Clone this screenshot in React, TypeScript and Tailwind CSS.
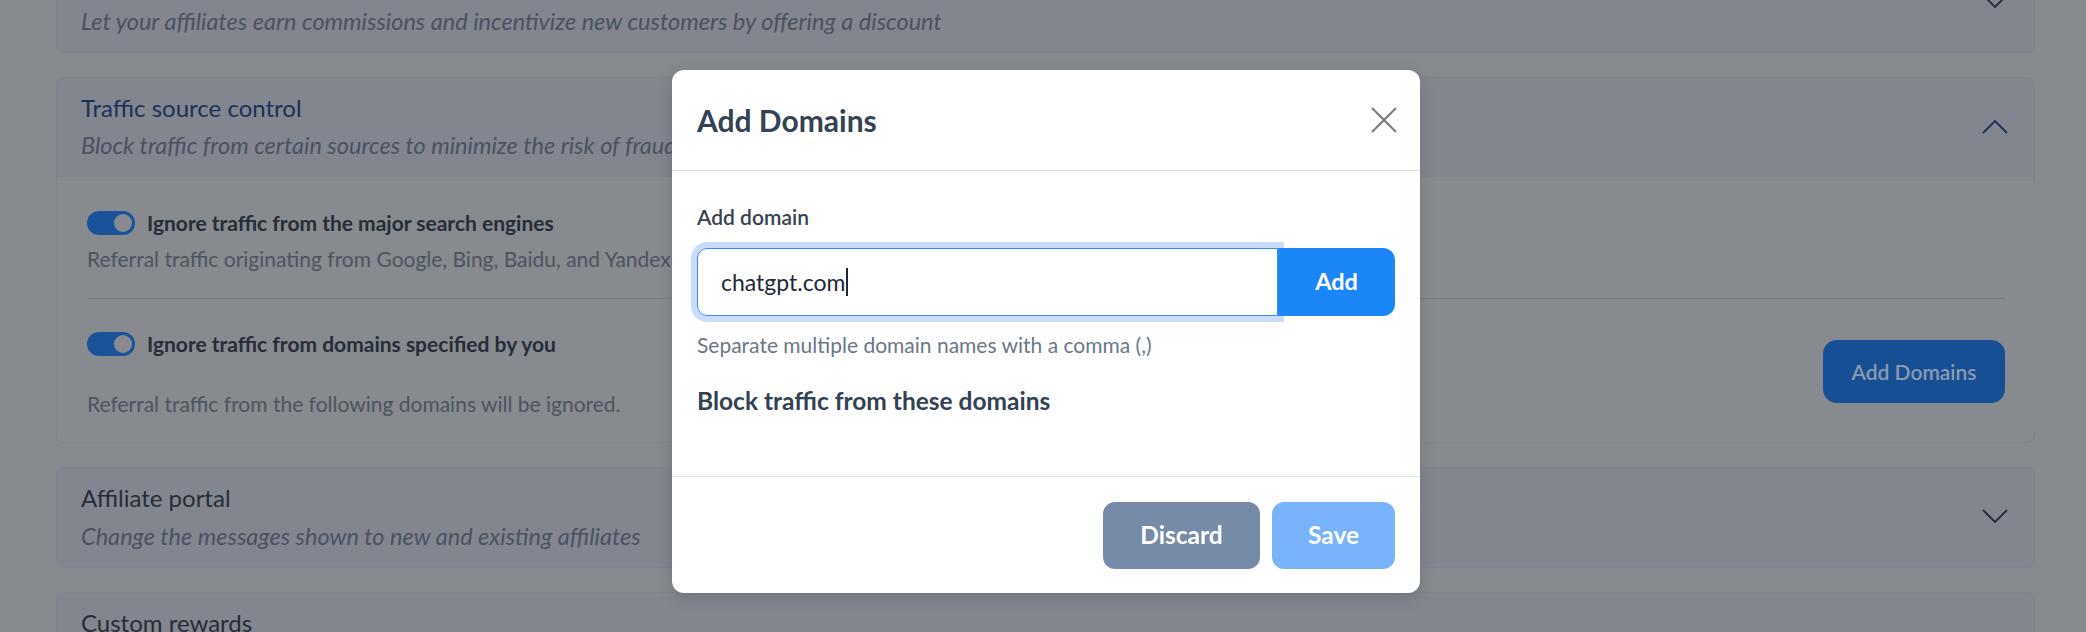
const font = "font-['Lato','Noto_Sans',sans-serif]"

function Chevron({ up = false, color = '#262d38' }: { up?: boolean; color?: string }) {
  return (
    <svg width="26" height="15" viewBox="0 0 26 15" fill="none" className="shrink-0">
      <polyline
        points={up ? '1,14 13,2 25,14' : '1,1 13,13 25,1'}
        stroke={color}
        strokeWidth="1.8"
        strokeLinejoin="miter"
      />
    </svg>
  )
}

function Toggle() {
  return (
    <div className="relative h-[24px] w-[48px] shrink-0 rounded-full bg-[#1a5399]">
      <div className="absolute right-[3px] top-[3px] h-[18px] w-[18px] rounded-full bg-[#878b8f]" />
    </div>
  )
}

function CollapsedCard({ title, subtitle }: { title: string; subtitle: string }) {
  return (
    <div className="flex items-center justify-between rounded-[8px] border border-[#7f838b] bg-[#83868e] pl-[24px] pr-[26px] pt-[14px] pb-[16px]">
      <div>
        <div className="text-[24px] leading-[32px] text-[#262d38]">{title}</div>
        <div className="mt-[7px] text-[23.5px] italic leading-[30px] text-[#4a5262]">{subtitle}</div>
      </div>
      <Chevron />
    </div>
  )
}

function Background() {
  return (
    <div className="flex flex-col gap-[24px] pl-[56px] pr-[51px]">
      <div className="-mt-[48px]">
        <CollapsedCard
          title="Customer discount"
          subtitle="Let your affiliates earn commissions and incentivize new customers by offering a discount"
        />
      </div>

      <div className="rounded-[8px] border border-[#7f838b] bg-[#878a8e]">
        <div className="flex items-center justify-between rounded-t-[8px] border-b border-[#7f838b] bg-[#83868e] pl-[24px] pr-[26px] pt-[14px] pb-[16px]">
          <div>
            <div className="text-[24px] leading-[32px] text-[#18335a]">Traffic source control</div>
            <div className="mt-[6px] text-[23.5px] italic leading-[30px] text-[#4a5262]">
              Block traffic from certain sources to minimize the risk of fraud
            </div>
          </div>
          <Chevron up color="#18335a" />
        </div>

        <div className="pl-[30px] pr-[29px] pt-[34px] pb-[24px]">
          <div className="flex items-center gap-[12px]">
            <Toggle />
            <span className="text-[21px] font-bold leading-[24px] text-[#262d38]">
              Ignore traffic from the major search engines
            </span>
          </div>
          <div className="mt-[10px] text-[21px] leading-[28px] text-[#4d5461]">
            Referral traffic originating from Google, Bing, Baidu, and Yandex
          </div>

          <div className="mt-[25px] h-px bg-[#777b82]" />

          <div className="mt-[33px] flex items-start justify-between">
            <div>
              <div className="flex items-center gap-[12px]">
                <Toggle />
                <span className="text-[21px] font-bold leading-[24px] text-[#262d38]">
                  Ignore traffic from domains specified by you
                </span>
              </div>
              <div className="mt-[34px] text-[21px] leading-[28px] text-[#4d5461]">
                Referral traffic from the following domains will be ignored.
              </div>
            </div>
            <button className="mt-[8px] h-[63px] w-[182px] rounded-[14px] bg-[#174f94] text-[21px] font-semibold text-[#8a9ab0]">
              Add Domains
            </button>
          </div>
        </div>
      </div>

      <CollapsedCard title="Affiliate portal" subtitle="Change the messages shown to new and existing affiliates" />
      <CollapsedCard title="Custom rewards" subtitle="Reward your affiliates for reaching milestones" />
    </div>
  )
}

function AddDomainsModal() {
  return (
    <div className="absolute left-[672px] top-[70px] flex h-[523px] w-[748px] flex-col rounded-[12px] bg-white shadow-[0_4px_16px_rgba(0,0,0,0.15)]">
      <div className="flex h-[101px] items-center justify-between border-b border-[#dde3ea] pl-[25px] pr-[23px]">
        <h2 className="text-[30px] font-bold leading-[36px] text-[#344256]">Add Domains</h2>
        <svg width="26" height="26" viewBox="0 0 26 26" fill="none">
          <path d="M1 1L25 25M25 1L1 25" stroke="#7d7d7d" strokeWidth="2.2" />
        </svg>
      </div>

      <div className="flex-1 border-b border-[#dde3ea] px-[25px] pt-[34px]">
        <div className="text-[21px] font-semibold leading-[24px] text-[#374151]">Add domain</div>
        <div className="mt-[19px] flex">
          <div className="flex h-[68px] flex-1 items-center rounded-l-[10px] border-[1.5px] border-[#3b8af5] pl-[23px] ring-[6px] ring-[#c9ddfa]">
            <span className="text-[23px] text-[#1f2937]">chatgpt.com</span>
            <span className="ml-[1px] h-[28px] w-[2px] bg-[#1f2937]" />
          </div>
          <button className="relative z-10 h-[68px] w-[117px] rounded-r-[12px] bg-[#1a86f8] text-[23.5px] font-bold text-white">
            Add
          </button>
        </div>
        <div className="mt-[17px] text-[21px] leading-[24px] text-[#6b7787]">
          Separate multiple domain names with a comma (,)
        </div>
        <div className="mt-[29px] text-[24.5px] font-bold leading-[30px] text-[#334155]">
          Block traffic from these domains
        </div>
      </div>

      <div className="flex h-[116px] items-center justify-end gap-[12px] px-[25px]">
        <button className="h-[67px] w-[157px] rounded-[12px] bg-[#768ba8] text-[24.5px] font-bold text-white">
          Discard
        </button>
        <button className="h-[67px] w-[123px] rounded-[12px] bg-[#78b3fc] text-[24.5px] font-bold text-white">
          Save
        </button>
      </div>
    </div>
  )
}

export default function App() {
  return (
    <div className={`relative h-[632px] w-[2086px] overflow-hidden bg-[#86898d] ${font}`}>
      <Background />
      <AddDomainsModal />
    </div>
  )
}
